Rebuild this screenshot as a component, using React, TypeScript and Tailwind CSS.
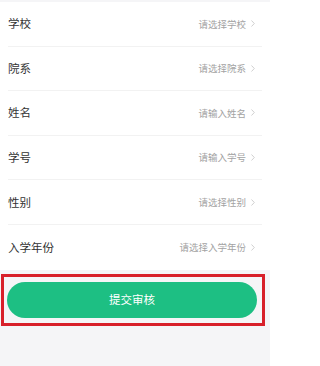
const rows = [
  { label: '学校', hint: '请选择学校' },
  { label: '院系', hint: '请选择院系' },
  { label: '姓名', hint: '请输入姓名' },
  { label: '学号', hint: '请输入学号' },
  { label: '性别', hint: '请选择性别' },
  { label: '入学年份', hint: '请选择入学年份' },
];

function Chevron() {
  return (
    <svg width="4" height="7" viewBox="0 0 4 7" fill="none" className="ml-[5px]">
      <path d="M0.5 0.5L3.3 3.5L0.5 6.5" stroke="#c4c4c4" strokeWidth="0.8" />
    </svg>
  );
}

export default function App() {
  return (
    <div
      className="min-h-[366px] w-[270px] bg-[#f5f5f7] pt-[2px]"
      style={{ fontFamily: '"Noto Sans CJK SC", "Noto Sans", sans-serif' }}
    >
      <div className="bg-white">
        {rows.map((row, i) => (
          <div key={row.label} className="px-2">
            <div
              className={`flex h-[44.6px] items-center justify-between ${
                i < rows.length - 1 ? 'border-b border-[#f2f2f2]' : ''
              }`}
            >
              <span className="text-[11.5px] text-[#333333]">{row.label}</span>
              <span className="mr-[7px] flex items-center text-[9.5px] text-[#a3a3a3]">
                {row.hint}
                <Chevron />
              </span>
            </div>
          </div>
        ))}
      </div>

      <div className="mt-[4px] ml-[1px] w-[264px] border-[3px] border-[#d8202a] pt-[5px] pr-[5px] pb-[5px] pl-[3px]">
        <button className="flex h-[36px] w-full items-center justify-center rounded-full bg-[#1dbf83] text-[11.5px] text-white">
          提交审核
        </button>
      </div>
    </div>
  );
}
